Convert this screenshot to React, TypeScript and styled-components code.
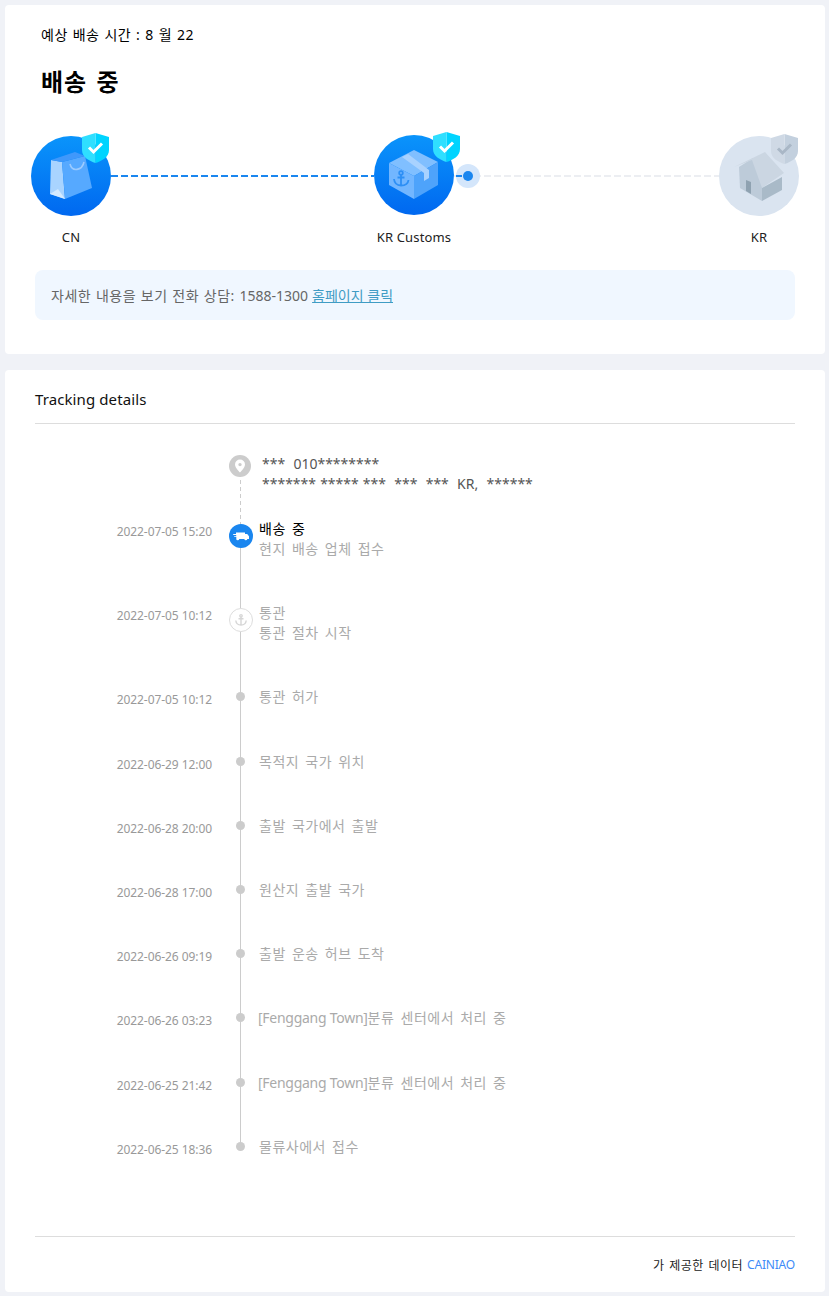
import React from "react";
import styled, { createGlobalStyle } from "styled-components";

const Global = createGlobalStyle`
  html, body { margin: 0; padding: 0; background: #f0f2f7; }
  body { font-family: "Noto Sans", "Noto Sans CJK KR", sans-serif; }
  * { box-sizing: border-box; }
`;
const Page = styled.div`
  display: flex; flex-direction: column; gap: 16px;
  padding: 5px 4px 4px 5px; width: 829px; height: 1296px;
`;
const Card = styled.section`
  background: #fff; border-radius: 4px;
`;
const SummaryCard = styled(Card)`
  height: 349px; padding: 20px 30px 0;
`;
const Eta = styled.div`
  font-size: 14px; line-height: 20px; color: #000; padding-left: 6px;
  letter-spacing: 0.5px; word-spacing: 0.8px;
`;
const Status = styled.h1`
  margin: 19px 0 0; padding-left: 6px; font-size: 24px; line-height: 36px; font-weight: 700; color: #000;
  letter-spacing: 1px; word-spacing: 2px;
`;
const Stepper = styled.div`
  display: flex; margin: 36px -4px 0;
`;
const Step = styled.div`
  width: 80px; flex: none; display: flex; flex-direction: column; align-items: center;
`;
const Disc = styled.svg<{ $lift?: boolean }>`
  display: block; width: 80px; height: 80px; overflow: visible;
  margin-top: ${p => (p.$lift ? "-1px" : "0")};
  margin-bottom: ${p => (p.$lift ? "1px" : "0")};
`;
const StepLabel = styled.div`
  margin-top: 11px; font-size: 13px; line-height: 20px; color: #222; white-space: nowrap;
  letter-spacing: 0.15px;
`;
const Connector = styled.div<{ $active?: boolean; $w: number }>`
  flex: none; width: ${p => p.$w}px; height: 2px; margin-top: 39px; position: relative;
  background: repeating-linear-gradient(90deg,
    ${p => (p.$active ? "#1a86ef" : "#eceef2")} 0 7px, transparent 7px 10px);
`;
const Pulse = styled.span`
  position: absolute; left: 2px; top: -11px; width: 24px; height: 24px; border-radius: 50%;
  background: #d4e6fb; display: flex; align-items: center; justify-content: center;
  &::before {
    content: ""; width: 10px; height: 10px; border-radius: 50%; background: #1a86ef;
  }
  &::after {
    content: ""; position: absolute; left: 0; top: 11px; width: 6px; height: 2px; background: #1a86ef;
  }
`;
const Notice = styled.div`
  margin-top: 23px; height: 50px; border-radius: 8px; background: #f0f7ff;
  padding: 0 16px; display: flex; align-items: center; gap: 4px;
  font-size: 14px; color: #666;
`;
const NoticeText = styled.span`
  letter-spacing: 0.5px; word-spacing: 0.6px;
`;
const NoticeNumber = styled.span`
  letter-spacing: 0;
`;
const NoticeLink = styled.a`
  color: #3f9cc4; text-decoration: underline;
`;
const DetailCard = styled(Card)`
  height: 922px; padding: 0 30px; display: flex; flex-direction: column;
`;
const DetailTitle = styled.h2`
  margin: 0; height: 54px; padding-top: 19px; font-size: 15px; line-height: 20px; font-weight: 400; color: #111;
  letter-spacing: 0.1px; border-bottom: 1px solid #ddd;
`;
const Timeline = styled.div`
  flex: 1; padding-top: 30px;
`;
const Row = styled.div<{ $h: number }>`
  display: flex; height: ${p => p.$h}px;
`;
const Time = styled.div<{ $big?: boolean }>`
  width: 177px; flex: none; text-align: right; font-size: 12px; line-height: 20px; color: #999;
  letter-spacing: -0.07px;
  margin-top: ${p => (p.$big ? "-2px" : "6px")};
`;
const Axis = styled.div`
  width: 24px; flex: none; margin-left: 17px; position: relative;
`;
const Rail = styled.span<{ $dashed?: boolean }>`
  position: absolute; left: 11px; top: 12px; bottom: -12px; width: 1px;
  background: ${p => (p.$dashed
    ? "repeating-linear-gradient(180deg,#ccc 0 4px,transparent 4px 7px)"
    : "#ccc")};
`;
const NodeSlot = styled.span`
  position: absolute; inset: 0 0 auto 0; height: 24px; display: flex; align-items: center; justify-content: flex-start; z-index: 1;
`;
const Dot = styled.span`
  width: 9px; height: 9px; border-radius: 50%; background: #ccc; margin-left: 7px;
`;
const NodeIcon = styled.svg`
  display: block; width: 24px; height: 24px;
`;
const Body = styled.div<{ $big?: boolean }>`
  margin-left: 6px; margin-top: ${p => (p.$big ? "-5px" : "3px")};
  font-size: 14px; line-height: 20px; color: #aaa;
  letter-spacing: 0.5px; word-spacing: 2px;
`;
const Heading = styled.div<{ $on?: boolean }>`
  color: ${p => (p.$on ? "#000" : "#aaa")};
`;
const Source = styled.span`
  letter-spacing: -0.27px; word-spacing: 0; margin-left: -1px;
`;
const Address = styled.div`
  margin-left: 9px; font-size: 14px; line-height: 20px; color: #555; white-space: pre; word-spacing: 0.5px;
`;
const Footer = styled.div`
  height: 56px; border-top: 1px solid #ddd; display: flex; justify-content: flex-end; align-items: center;
  gap: 4px; font-size: 12px; color: #222;
`;
const FooterText = styled.span`
  letter-spacing: 0.5px; word-spacing: 1px;
`;
const Brand = styled.span`
  color: #3d8bf8; letter-spacing: -0.2px;
`;

const Shield = ({ x, y = 0, muted }: { x: number; y?: number; muted?: boolean }) => (
  <g transform={`translate(${x} ${y})`}>
    <path d="M13.5 -3 L27 1 V14 C27 21 20 25 13.5 27 Z" fill={muted ? "#c3d0de" : "#00d4ff"} />
    <path d="M13.5 -3 L0 1 V14 C0 21 7 25 13.5 27 Z" fill={muted ? "#cfd9e5" : "#2fdfff"} />
    <path d="M7 11.5 L11.5 16 L20 7.5" fill="none" stroke={muted ? "#a9b7c6" : "#fff"} strokeWidth="3" />
  </g>
);

const Grad = ({ id }: { id: string }) => (
  <defs>
    <linearGradient id={id} x1="0" y1="0" x2="0" y2="1">
      <stop offset="0" stopColor="#0a94fb" />
      <stop offset="1" stopColor="#0068f0" />
    </linearGradient>
  </defs>
);

const BagDisc = () => (
  <Disc viewBox="0 0 80 80">
    <Grad id="g1" />
    <circle cx="40" cy="40" r="40" fill="url(#g1)" />
    <path d="M20 24 L31 26 L34 63 L19 58 Z" fill="#a9d4ff" />
    <path d="M19 58 L27 53 L34 63 Z" fill="#d4eaff" />
    <path d="M31 26 L54 20 L61 52 L34 63 Z" fill="#56a9ff" />
    <path d="M20 24 L44 16 L54 20 L31 26 Z" fill="#3f98fb" />
    <path d="M39 28 C41 36 51 35 53 26" fill="none" stroke="#9ccbff" strokeWidth="1.6" />
    <Shield x={51} />
  </Disc>
);

const BoxDisc = () => (
  <Disc viewBox="0 0 80 80" $lift>
    <Grad id="g2" />
    <circle cx="40" cy="40" r="40" fill="url(#g2)" />
    <path d="M40 15 L64 27 L40 41 L15 28 Z" fill="#80bfff" />
    <path d="M15 28 L40 41 V64 L15 50 Z" fill="#72b6ff" />
    <path d="M40 41 L64 27 V50 L40 64 Z" fill="#4ea3fb" />
    <path d="M28 22 L34 19 L55 35 V43 L50 46 V38 Z" fill="#a8d2ff" />
    <g fill="none" stroke="#2d8ff5" strokeWidth="1.8">
      <circle cx="27" cy="38" r="1.8" />
      <path d="M27 40 V50 M23.5 42.5 H30.5 M20 44 C20.5 49 24 50.5 27 50.5 C31 50.5 34 49 34.5 45" />
    </g>
    <Shield x={59} />
  </Disc>
);

const HouseDisc = () => (
  <Disc viewBox="0 0 80 80">
    <circle cx="40" cy="40" r="40" fill="#dae4f0" />
    <path d="M20 31 L34 22 L43 47 V65 L21 52 Z" fill="#bdcbd9" />
    <path d="M15 31 L46 16 L65 37 L43 52 L33 24 Z" fill="#cbd6e2" />
    <path d="M43 52 L63 41 V54 L43 65 Z" fill="#a9bac8" />
    <path d="M27 44 L32 46 V58 L27 55 Z" fill="#8fa2b1" />
    <Shield x={52} y={1} muted />
  </Disc>
);

const PinIcon = () => (
  <NodeIcon viewBox="0 0 24 24">
    <circle cx="11" cy="12" r="11" fill="#ccc" />
    <path fillRule="evenodd" fill="#fff" d="M11 5.5a5 5 0 0 0-5 5c0 3.4 5 8 5 8s5-4.6 5-8a5 5 0 0 0-5-5Zm0 3.4a1.7 1.7 0 1 1 0 3.4 1.7 1.7 0 0 1 0-3.4Z" />
  </NodeIcon>
);
const TruckIcon = () => (
  <NodeIcon viewBox="0 0 24 24">
    <circle cx="12" cy="12" r="12" fill="#1a86ef" />
    <path fill="#fff" d="M7 8.5h9v1.6h2.2l1.8 2.2v2.8h-1.6a1.6 1.6 0 0 1-3.1 0h-5a1.6 1.6 0 0 1-3.1 0H7.3v-2H5.2v-.9h2V11H4.2v-.9H7Z" />
  </NodeIcon>
);
const AnchorIcon = () => (
  <NodeIcon viewBox="0 0 24 24">
    <circle cx="12" cy="12" r="11.5" fill="#fff" stroke="#ddd" />
    <g fill="none" stroke="#d6d6d6" strokeWidth="1.4">
      <circle cx="12" cy="7.8" r="1.2" />
      <path d="M12 9v8M9.5 10.8h5M6.8 12.5c.3 3 2.8 4.5 5.2 4.5s4.9-1.5 5.2-4.5" />
    </g>
  </NodeIcon>
);

type Ev = { time: string; title: string; source?: string; note?: string; h: number; icon?: "truck" | "anchor"; on?: boolean };
const events: Ev[] = [
  { time: "2022-07-05 15:20", title: "배송 중", note: "현지 배송 업체 접수", h: 84, icon: "truck", on: true },
  { time: "2022-07-05 10:12", title: "통관", note: "통관 절차 시작", h: 76, icon: "anchor" },
  { time: "2022-07-05 10:12", title: "통관 허가", h: 65 },
  { time: "2022-06-29 12:00", title: "목적지 국가 위치", h: 64 },
  { time: "2022-06-28 20:00", title: "출발 국가에서 출발", h: 64 },
  { time: "2022-06-28 17:00", title: "원산지 출발 국가", h: 64 },
  { time: "2022-06-26 09:19", title: "출발 운송 허브 도착", h: 64 },
  { time: "2022-06-26 03:23", source: "[Fenggang Town]", title: "분류 센터에서 처리 중", h: 65 },
  { time: "2022-06-25 21:42", source: "[Fenggang Town]", title: "분류 센터에서 처리 중", h: 64 },
  { time: "2022-06-25 18:36", title: "물류사에서 접수", h: 102 },
];

export default function App() {
  return (
    <Page>
      <Global />
      <SummaryCard>
        <Eta>예상 배송 시간 : 8 월 22</Eta>
        <Status>배송 중</Status>
        <Stepper>
          <Step><BagDisc /><StepLabel>CN</StepLabel></Step>
          <Connector $active $w={263} />
          <Step><BoxDisc /><StepLabel>KR Customs</StepLabel></Step>
          <Connector $w={265}><Pulse /></Connector>
          <Step><HouseDisc /><StepLabel>KR</StepLabel></Step>
        </Stepper>
        <Notice>
          <NoticeText>자세한 내용을 보기 전화 상담: <NoticeNumber>1588-1300</NoticeNumber></NoticeText>
          <NoticeLink>홈페이지 클릭</NoticeLink>
        </Notice>
      </SummaryCard>
      <DetailCard>
        <DetailTitle>Tracking details</DetailTitle>
        <Timeline>
          <Row $h={70}>
            <Time />
            <Axis><Rail $dashed /><NodeSlot><PinIcon /></NodeSlot></Axis>
            <Address>{"***  010********\n******* ***** ***  ***  ***  KR,  ******"}</Address>
          </Row>
          {events.map((e, i) => {
            const big = !!e.icon;
            return (
              <Row key={i} $h={e.h}>
                <Time $big={big}>{e.time}</Time>
                <Axis>
                  {i < events.length - 1 && <Rail />}
                  <NodeSlot>
                    {e.icon === "truck" ? <TruckIcon /> : e.icon === "anchor" ? <AnchorIcon /> : <Dot />}
                  </NodeSlot>
                </Axis>
                <Body $big={big}>
                  <Heading $on={e.on}>{e.source && <Source>{e.source}</Source>}{e.title}</Heading>
                  {e.note && <div>{e.note}</div>}
                </Body>
              </Row>
            );
          })}
        </Timeline>
        <Footer><FooterText>가 제공한 데이터</FooterText> <Brand>CAINIAO</Brand></Footer>
      </DetailCard>
    </Page>
  );
}
